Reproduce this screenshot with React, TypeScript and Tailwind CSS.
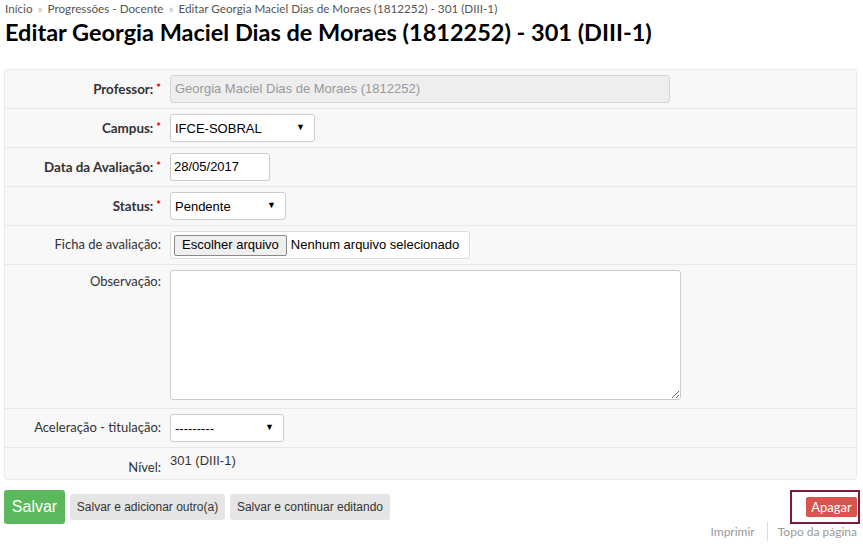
import type { ReactNode } from "react";

const lato = "font-['Lato','Liberation_Sans',sans-serif]";
const arial = "font-['Liberation_Sans',Arial,sans-serif]";

function Row({
  label,
  required,
  children,
  className = "",
  labelClass = "pt-[4px]",
}: {
  label: string;
  required?: boolean;
  children: ReactNode;
  className?: string;
  labelClass?: string;
}) {
  return (
    <div className={`flex border-b border-[#e8e8e8] last:border-b-0 ${className}`}>
      <div
        className={`w-[156px] shrink-0 text-right text-[#333] ${lato} ${
          required ? "text-[13.4px] font-bold" : "text-[13px]"
        } ${labelClass}`}
      >
        {label}
        {required && <span className="ml-[3px] align-[2px] text-[11px] text-[#c00]">*</span>}
      </div>
      <div className="ml-[9px] min-w-0 flex-1">{children}</div>
    </div>
  );
}

function FakeSelect({ value, width }: { value: string; width: string }) {
  return (
    <div
      className={`flex h-[28px] items-center justify-between rounded-[3px] border border-[#ccc] bg-white pl-[4px] pr-[9px] text-[13px] text-black ${arial} ${width}`}
    >
      <span className="pt-px">{value}</span>
      <span className="text-[9px]">▼</span>
    </div>
  );
}

export default function App() {
  return (
    <div className={`h-[544px] w-[863px] overflow-hidden bg-white ${lato}`}>
      <div className="px-[5px] pt-px text-[11.7px] leading-[14px] text-[#555]">
        Início <span className="mx-[2px] text-[#bbb]">»</span> Progressões - Docente{" "}
        <span className="mx-[2px] text-[#bbb]">»</span> Editar Georgia Maciel Dias de Moraes (1812252) - 301
        (DIII-1)
      </div>
      <h1 className="mt-[3px] px-[5px] text-[23.5px] font-bold leading-[28px] text-black">
        Editar Georgia Maciel Dias de Moraes (1812252) - 301 (DIII-1)
      </h1>

      <div className="mx-[4px] mt-[23px] w-[853px] rounded-[3px] border border-[#eaeaea] bg-[#f8f8f8]">
        <Row label="Professor:" required className="py-[5px]">
          <div
            className={`flex h-[28px] w-[500px] items-center rounded-[3px] border border-[#d5d5d5] bg-[#eee] px-[4px] text-[13px] text-[#999] ${arial}`}
          >
            Georgia Maciel Dias de Moraes (1812252)
          </div>
        </Row>
        <Row label="Campus:" required className="py-[5px]">
          <FakeSelect value="IFCE-SOBRAL" width="w-[145px]" />
        </Row>
        <Row label="Data da Avaliação:" required className="py-[5px]">
          <div
            className={`flex h-[28px] w-[100px] items-center rounded-[3px] border border-[#ccc] bg-white px-[3px] text-[13px] text-black ${arial}`}
          >
            28/05/2017
          </div>
        </Row>
        <Row label="Status:" required className="py-[5px]">
          <FakeSelect value="Pendente" width="w-[116px]" />
        </Row>
        <Row label="Ficha de avaliação:" className="py-[5px]">
          <div
            className={`flex h-[28px] w-[300px] items-center rounded-[3px] border border-[#ddd] bg-white pl-[3px] text-[13px] text-black ${arial}`}
          >
            <span className="flex h-[21px] items-center rounded-[2px] border border-[#888] bg-[#efefef] px-[7px]">
              Escolher arquivo
            </span>
            <span className="ml-[4px]">Nenhum arquivo selecionado</span>
          </div>
        </Row>
        <Row label="Observação:" className="pt-[5px] pb-[8px]" labelClass="pt-[2px]">
          <textarea
            readOnly
            defaultValue=""
            className="block h-[130px] w-[511px] rounded-[3px] border border-[#ccc] bg-white"
          />
        </Row>
        <Row label="Aceleração - titulação:" className="py-[5px]">
          <FakeSelect value="---------" width="w-[114px]" />
        </Row>
        <Row label="Nível:" className="h-[31px] pt-[5px]" labelClass="pt-[5px]">
          <div className={`text-[13px] leading-[16px] text-[#333] ${arial}`}>301 (DIII-1)</div>
        </Row>
      </div>

      <div className="mx-[4px] mt-[10px] flex w-[853px] items-start justify-between">
        <div className={`flex items-center gap-[5px] ${arial}`}>
          <button
            type="button"
            className="h-[34px] w-[61px] rounded-[3px] bg-[#5cb85c] text-[16px] text-white"
          >
            Salvar
          </button>
          <button
            type="button"
            className="h-[26px] w-[155px] rounded-[3px] bg-[#e5e5e5] text-[12px] text-[#333]"
          >
            Salvar e adicionar outro(a)
          </button>
          <button
            type="button"
            className="h-[26px] w-[160px] rounded-[3px] bg-[#e5e5e5] text-[12px] text-[#333]"
          >
            Salvar e continuar editando
          </button>
        </div>
        <div className="mr-[-3px] flex h-[34px] w-[70px] items-center justify-end border-2 border-[#7f1a3c] pr-px">
          <button
            type="button"
            className={`h-[20px] w-[51px] rounded-[2px] bg-[#d9534f] text-[13px] leading-[20px] text-white ${lato}`}
          >
            Apagar
          </button>
        </div>
      </div>

      <div className="mr-[6px] mt-[-2px] flex justify-end text-[12px] leading-[19px] text-[#999]">
        <span className="pr-[12px]">Imprimir</span>
        <span className="border-l border-[#ddd] pl-[10px]">Topo da página</span>
      </div>
    </div>
  );
}
